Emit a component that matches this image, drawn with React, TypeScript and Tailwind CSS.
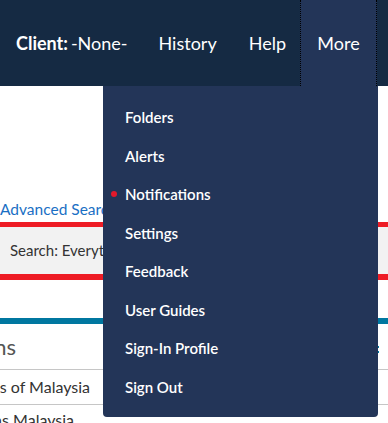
import { ChevronDown } from 'lucide-react';

const menuItems = [
  { label: 'Folders' },
  { label: 'Alerts' },
  { label: 'Notifications', dot: true },
  { label: 'Settings' },
  { label: 'Feedback' },
  { label: 'User Guides' },
  { label: 'Sign-In Profile' },
  { label: 'Sign Out' },
];

// Text whose start is scrolled off the left edge: right edge stays put, overflow is clipped
function Clipped({ text, width }: { text: string; width: string }) {
  return (
    <div className={`flex justify-end overflow-hidden whitespace-nowrap ${width}`}>
      <span>{text}</span>
    </div>
  );
}

export default function App() {
  return (
    <div className="relative h-[423px] w-[388px] overflow-hidden bg-white font-['Lato','Noto_Sans',sans-serif]">
      {/* Top nav */}
      <nav className="flex h-[86px] items-stretch bg-[#152a43] text-[18px] text-white">
        <div className="flex items-center pl-[16px]">
          <span className="font-bold">Client:</span>
          <span className="ml-[3px]">-None-</span>
        </div>
        <div className="ml-[31px] flex items-center">History</div>
        <div className="ml-[32px] flex items-center">Help</div>
        <div className="ml-[14px] flex w-[77px] items-center justify-center border-x border-dotted border-black bg-[#233558]">
          More
        </div>
      </nav>

      {/* Page underneath */}
      <div className="mt-[113px] h-[20px] text-[15.5px] leading-[20px] text-[#1a6fc4]">Advanced Search</div>
      <div className="mt-[3px] flex h-[58px] items-center border-y-[5px] border-b-[6px] border-[#ee1c25] bg-[#f2f2f2] pl-[10px] text-[15px] text-[#333]">
        Search: Everything
      </div>
      <div className="mt-[38px] h-[6px] bg-[#0077a0]" />
      <div className="flex h-[46px] items-center border-b border-[#c6c6c6] text-[22px] text-[#555]">
        <Clipped text="Publications" width="w-[16px]" />
      </div>
      <div className="flex h-[35px] items-center border-b border-[#c6c6c6] text-[16px] text-[#333]">
        <Clipped text="Statutes of Malaysia" width="w-[90px]" />
      </div>
      <div className="flex h-[30px] items-center text-[16px] text-[#333]">
        <Clipped text="Regulations Malaysia" width="w-[74px]" />
      </div>

      <div className="absolute left-[377px] top-[346px] flex flex-col gap-[3px]">
        <span className="h-[2px] w-[2px] bg-[#0077a0]" />
        <span className="h-[2px] w-[2px] bg-[#0077a0]" />
      </div>
      <ChevronDown className="absolute left-[363px] top-[406px] text-[#4a8fe0]" size={16} strokeWidth={1.5} />

      {/* More dropdown */}
      <div className="absolute left-[103px] top-[86px] h-[331px] w-[275px] rounded-b-[4px] bg-[#233558] pt-[12px]">
        {menuItems.map((item) => (
          <div key={item.label} className="relative flex h-[38.5px] items-center pl-[22px] text-[15px] font-semibold text-white">
            {item.dot && <span className="absolute left-[8px] h-[6px] w-[6px] rounded-full bg-[#e3192b]" />}
            {item.label}
          </div>
        ))}
      </div>
    </div>
  );
}
